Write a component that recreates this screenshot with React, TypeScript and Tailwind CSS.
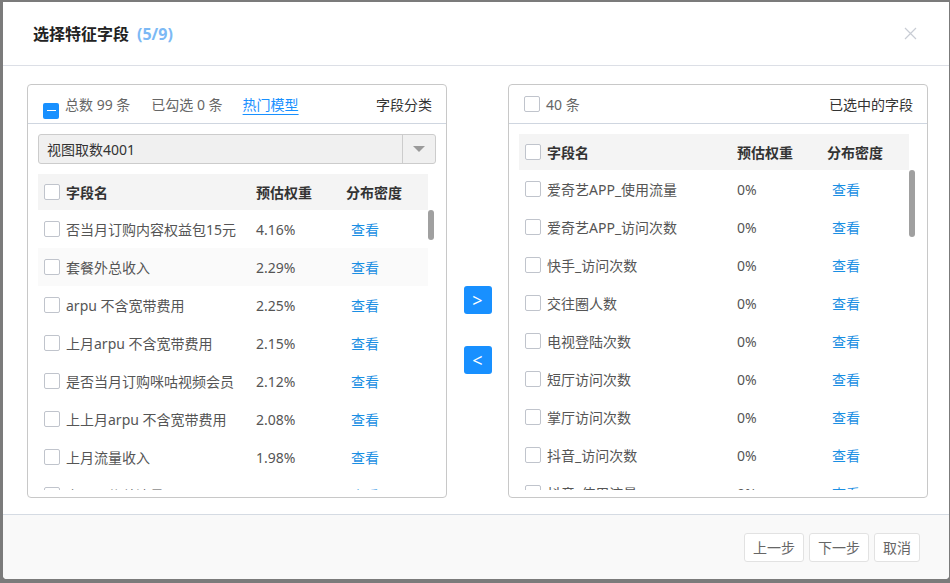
import React from "react";

const font = { fontFamily: '"Noto Sans", "Noto Sans CJK SC", sans-serif' };

function Box({ checked }: { checked?: "ind" }) {
  if (checked === "ind") {
    return (
      <span className="flex h-[16px] w-[16px] shrink-0 items-center justify-center rounded-[2px] bg-[#1890ff]">
        <span className="h-[1.5px] w-[9px] bg-white" />
      </span>
    );
  }
  return <span className="block h-[16px] w-[16px] shrink-0 rounded-[2px] border border-[#c0c4cc] bg-white" />;
}

type Row = { name: string; w: string };

const leftRows: Row[] = [
  { name: "否当月订购内容权益包15元", w: "4.16%" },
  { name: "套餐外总收入", w: "2.29%" },
  { name: "arpu 不含宽带费用", w: "2.25%" },
  { name: "上月arpu 不含宽带费用", w: "2.15%" },
  { name: "是否当月订购咪咕视频会员", w: "2.12%" },
  { name: "上上月arpu 不含宽带费用", w: "2.08%" },
  { name: "上月流量收入", w: "1.98%" },
  { name: "上月通信总流量", w: "1.94%" },
];

const rightRows: Row[] = [
  { name: "爱奇艺APP_使用流量", w: "0%" },
  { name: "爱奇艺APP_访问次数", w: "0%" },
  { name: "快手_访问次数", w: "0%" },
  { name: "交往圈人数", w: "0%" },
  { name: "电视登陆次数", w: "0%" },
  { name: "短厅访问次数", w: "0%" },
  { name: "掌厅访问次数", w: "0%" },
  { name: "抖音_访问次数", w: "0%" },
  { name: "抖音_使用流量", w: "0%" },
];

function Table({ rows, listH, thumbH, shadeIdx }: { rows: Row[]; listH: string; thumbH: string; shadeIdx?: number }) {
  return (
    <div className="flex">
      <div className="w-[390px]">
        <div className="flex h-[36px] items-center bg-[#f4f4f4] pl-[6px] text-[14px] font-bold text-[#333]">
          <div className="flex w-[212px] items-center gap-[6px]">
            <Box />
            <span>字段名</span>
          </div>
          <div className="w-[90px]">预估权重</div>
          <div>分布密度</div>
        </div>
        <div className={`overflow-hidden ${listH}`}>
          {rows.map((r, i) => (
            <div
              key={i}
              className={`flex h-[38px] items-center pl-[6px] text-[14px] text-[#555] ${i === shadeIdx ? "bg-[#fafafa]" : ""}`}
            >
              <div className="flex w-[212px] items-center gap-[6px] whitespace-nowrap">
                <Box />
                <span>{r.name}</span>
              </div>
              <div className="w-[90px]">{r.w}</div>
              <div className="pl-[5px] text-[#1a8fe3]">查看</div>
            </div>
          ))}
        </div>
      </div>
      <div className="w-[6px] pt-[36px]">
        <div className={`w-[6px] rounded-full bg-[#a0a0a0] ${thumbH}`} />
      </div>
    </div>
  );
}

export default function App() {
  return (
    <div className="h-[583px] w-[950px] overflow-hidden bg-[#7b7b7b]" style={font}>
      <div className="ml-[3px] mt-[2px] w-[946px] overflow-hidden rounded-b-[4px] bg-white">
        {/* header */}
        <div className="flex h-[64px] items-center justify-between border-b border-[#dcdfe6] pl-[30px] pr-[32px]">
          <div className="flex items-center text-[16px] font-bold text-[#222]">
            <span>选择特征字段</span>
            <span className="ml-[8px] text-[#7cb9f5]">(5/9)</span>
          </div>
          <svg width="13" height="13" viewBox="0 0 13 13">
            <path d="M1 1L12 12M12 1L1 12" stroke="#c8ccd4" strokeWidth="1.2" />
          </svg>
        </div>

        {/* body */}
        <div className="flex h-[448px] pl-[24px] pt-[18px]">
          {/* left panel */}
          <div className="h-[414px] w-[420px] rounded-[4px] border border-[#c8c8c8]">
            <div className="flex h-[39px] items-center border-b border-[#cfd6e0] pl-[15px] pr-[14px] text-[14px]">
              <span className="mt-[13px]">
                <Box checked="ind" />
              </span>
              <span className="ml-[6px] text-[#666]">总数 99 条</span>
              <span className="ml-[21px] text-[#666]">已勾选 0 条</span>
              <span className="ml-[20px] text-[#1890ff] underline decoration-[#1890ff] underline-offset-[4px]">热门模型</span>
              <span className="ml-auto text-[#333]">字段分类</span>
            </div>
            <div className="px-[10px] pt-[10px]">
              <div className="flex h-[30px] items-center rounded-[3px] border border-[#cccccc] bg-[#f0f0f0]">
                <span className="flex-1 pl-[8px] text-[14px] text-[#333]">视图取数4001</span>
                <div className="flex h-full w-[33px] items-center justify-center border-l border-[#cccccc]">
                  <svg width="12" height="6" viewBox="0 0 12 6">
                    <path d="M0 0H12L6 6Z" fill="#9a9a9a" />
                  </svg>
                </div>
              </div>
            </div>
            <div className="pl-[10px] pt-[10px]">
              <Table rows={leftRows} listH="h-[280px]" thumbH="h-[30px]" shadeIdx={1} />
            </div>
          </div>

          {/* middle */}
          <div className="flex w-[61px] flex-col items-center pt-[202px]">
            <div className="flex h-[28px] w-[28px] items-center justify-center rounded-[3px] bg-[#1890ff] text-[18px] text-white">
              &gt;
            </div>
            <div className="mt-[32px] flex h-[28px] w-[28px] items-center justify-center rounded-[3px] bg-[#1890ff] text-[18px] text-white">
              &lt;
            </div>
          </div>

          {/* right panel */}
          <div className="h-[414px] w-[420px] rounded-[4px] border border-[#c8c8c8]">
            <div className="flex h-[39px] items-center border-b border-[#cfd6e0] pl-[15px] pr-[14px] text-[14px]">
              <Box />
              <span className="ml-[6px] text-[#666]">40 条</span>
              <span className="ml-auto text-[#333]">已选中的字段</span>
            </div>
            <div className="pl-[10px] pt-[10px]">
              <Table rows={rightRows} listH="h-[320px]" thumbH="h-[67px]" />
            </div>
          </div>
        </div>

        {/* footer */}
        <div className="flex h-[65px] items-center justify-end gap-[5px] border-t border-[#d5dbe3] bg-[#f9f9f9] pr-[29px]">
          {["上一步", "下一步", "取消"].map((t) => (
            <div
              key={t}
              className="flex h-[29px] items-center justify-center rounded-[3px] border border-[#e2e2e2] bg-white px-[8px] text-[14px] text-[#666]"
            >
              {t}
            </div>
          ))}
        </div>
      </div>
    </div>
  );
}
